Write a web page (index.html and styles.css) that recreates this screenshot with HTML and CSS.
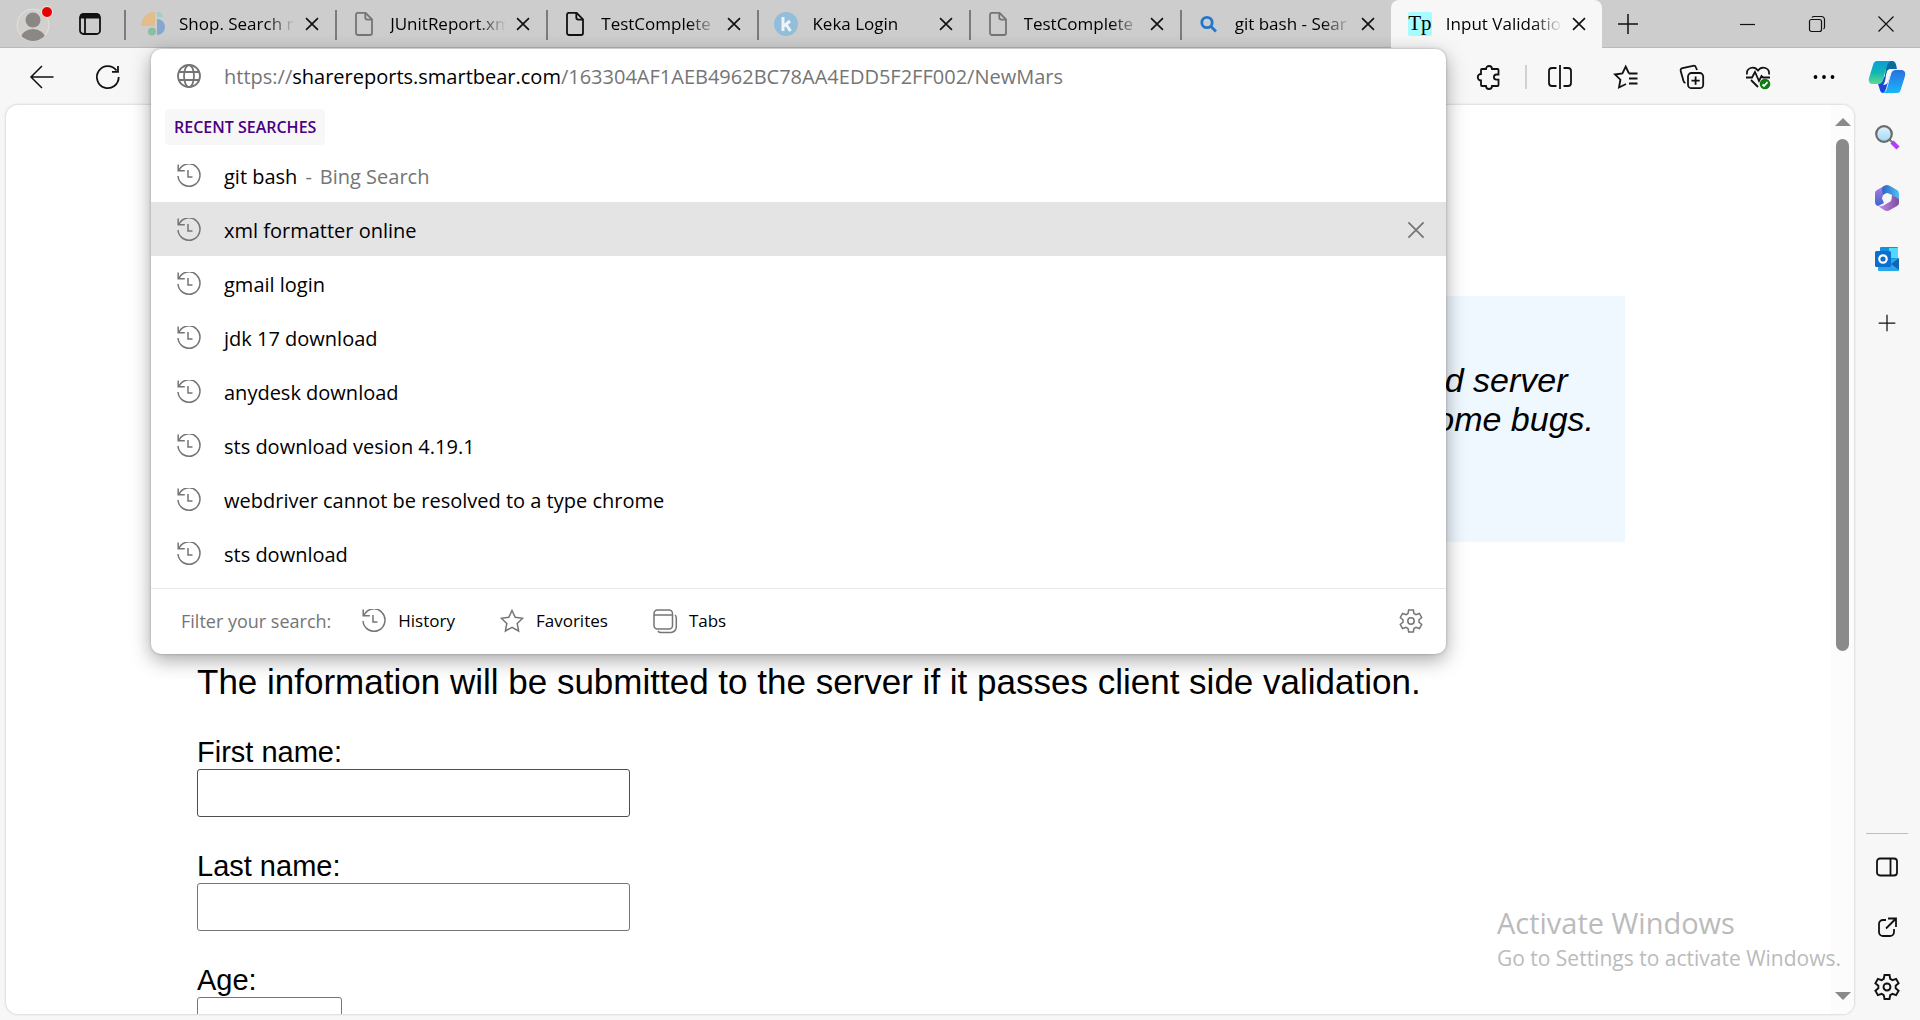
FILE: index.html
```html
<!DOCTYPE html>
<html lang="en">
<head>
<meta charset="utf-8">
<title>Input Validation</title>
<link rel="stylesheet" href="styles.css">
</head>
<body>
<svg class="defs" aria-hidden="true">
  <symbol id="close" viewBox="0 0 24 24"><path d="M5.500 5.500l13 13M18.500 5.500l-13 13"/></symbol>
  <symbol id="plus" viewBox="0 0 24 24"><path d="M12 2v20M2 12h20"/></symbol>
  <symbol id="page" viewBox="0 0 24 24"><path d="M6 .8h7.500L20 7.300V21a2 2 0 0 1-2 2H6a2 2 0 0 1-2-2V2.800a2 2 0 0 1 2-2zM13.300 1v4.600a2 2 0 0 0 2 2H20"/></symbol>
  <symbol id="history" viewBox="0 0 24 24"><path d="M1.200 .5v6.300h6.600M2 6.300A11 11.200 0 1 1 1 12M11 6v7h4.500"/></symbol>
  <symbol id="gear" viewBox="0 0 24 24"><path d="M9.700 1h4.600l.7 3.500 2 1.200 3.400-1.200 2.300 4-2.700 2.300v2.400l2.700 2.300-2.300 4-3.400-1.200-2 1.200-.7 3.500H9.700L9 19.500l-2-1.200-3.400 1.200-2.300-4L4 13.200v-2.400L1.300 8.500l2.300-4L7 5.700l2-1.200z"/><circle cx="12" cy="12" r="3.200"/></symbol>
  <symbol id="star" viewBox="0 0 24 24"><path d="M12 1.500l3.200 6.800 7.500 1-5.500 5.200 1.400 7.500L12 18.300 5.400 22l1.400-7.500L1.300 9.300l7.500-1z"/></symbol>
</svg>

<header class="titlebar">
  <button class="avatar" aria-label="Profile">
    <svg width="36" height="36" viewBox="0 0 36 36"><defs><clipPath id="face"><circle cx="17" cy="19" r="16"/></clipPath></defs><circle cx="17" cy="19" r="16" fill="#d2d0cd" stroke="#e4e2df"/><g clip-path="url(#face)" fill="#8a8785"><circle cx="17" cy="14" r="7.500"/><ellipse cx="17" cy="32" rx="12" ry="9"/></g><circle cx="31" cy="6" r="5.500" fill="#e60000" stroke="#eee" stroke-width="1"/></svg>
  </button>
  <button class="tab-menu" aria-label="Tab actions">
    <svg class="ink bold" width="24" height="24" viewBox="0 0 24 24"><rect x="2" y="2" width="20" height="20" rx="3.500"/><path d="M2 4.500h20" stroke-width="4"/><path d="M7 6v16"/></svg>
  </button>
  <nav class="tabs">
    <div class="tab">
      <svg class="fav" viewBox="0 0 24 24"><path d="M0 14A14 14 0 0 1 14 0v14z" fill="#e2bd8a"/><path d="M16 0a6 6 0 0 1 6 5h-6z" fill="#9fcdd0"/><path d="M16 7a8 8 0 0 1 0 16z" fill="#86a7cf"/><circle cx="11" cy="19.500" r="4" fill="#8bbfa5"/></svg>
      <span class="tab-title">Shop. Search r</span><button class="tab-close" aria-label="Close tab"><svg class="ink bold"><use href="#close"/></svg></button>
    </div>
    <div class="tab">
      <svg class="fav gray bold"><use href="#page"/></svg>
      <span class="tab-title">JUnitReport.xm</span><button class="tab-close" aria-label="Close tab"><svg class="ink bold"><use href="#close"/></svg></button>
    </div>
    <div class="tab">
      <svg class="fav ink bold"><use href="#page"/></svg>
      <span class="tab-title">TestComplete</span><button class="tab-close" aria-label="Close tab"><svg class="ink bold"><use href="#close"/></svg></button>
    </div>
    <div class="tab">
      <svg class="fav" viewBox="0 0 24 24"><circle cx="12" cy="12" r="12" fill="#93bedb"/><path d="M9 5v14M16 9l-6 5M12 12.500l4.500 6.500" stroke="#eef4f8" stroke-width="3" fill="none"/></svg>
      <span class="tab-title">Keka Login</span><button class="tab-close" aria-label="Close tab"><svg class="ink bold"><use href="#close"/></svg></button>
    </div>
    <div class="tab">
      <svg class="fav gray bold"><use href="#page"/></svg>
      <span class="tab-title">TestComplete</span><button class="tab-close" aria-label="Close tab"><svg class="ink bold"><use href="#close"/></svg></button>
    </div>
    <div class="tab">
      <svg class="fav" viewBox="0 0 24 24"><g fill="none" stroke="#2277cc" stroke-width="2.800"><circle cx="10" cy="10.500" r="5.200"/><path d="M14 14.500l5 5"/></g></svg>
      <span class="tab-title">git bash - Sear</span><button class="tab-close" aria-label="Close tab"><svg class="ink bold"><use href="#close"/></svg></button>
    </div>
    <div class="tab active">
      <span class="fav tp">Tp</span>
      <span class="tab-title">Input Validatio</span><button class="tab-close" aria-label="Close tab"><svg class="ink bold"><use href="#close"/></svg></button>
    </div>
  </nav>
  <button class="new-tab" aria-label="New tab"><svg class="ink" width="24" height="24"><use href="#plus"/></svg></button>
  <div class="window-buttons">
    <button aria-label="Minimize"><svg class="ink thin" width="16" height="16" viewBox="0 0 16 16"><path d="M0 8.500h15"/></svg></button>
    <button aria-label="Restore"><svg class="ink thin" width="16" height="16" viewBox="0 0 16 16"><rect x=".5" y="3.500" width="12" height="12" rx="2"/><path d="M3 1.500Q3.500.5 5 .5h7.500a3 3 0 0 1 3 3V11q0 1.500-1 2"/></svg></button>
    <button aria-label="Close"><svg class="ink thin" width="16" height="16" viewBox="0 0 16 16"><path d="M.5.500l15 15M15.500.5l-15 15"/></svg></button>
  </div>
</header>

<div class="toolbar">
  <button class="tool" aria-label="Back"><svg class="ink" viewBox="0 0 24 24"><path d="M23.500 12H1M12 1L1 12l11 11"/></svg></button>
  <button class="tool" aria-label="Refresh"><svg class="ink bold" viewBox="0 0 24 24"><path d="M22.700 12A10.900 11 0 1 1 20.500 5.500M22 1v5.800h-6"/></svg></button>
  <div class="toolbar-end">
    <button class="tool ext" aria-label="Extensions"><svg class="ink bold" viewBox="0 0 24 24"><path d="M5 4h4a3 3 0 0 1 6 0h5.500a1 1 0 0 1 1 1v4.500h-2a2.600 2.600 0 0 0 0 5.200h2V20a1 1 0 0 1-1 1H15a3 3 0 0 1-6 0H5a1 1 0 0 1-1-1v-4.500a3 3 0 0 1 0-6.500V5a1 1 0 0 1 1-1z"/></svg></button>
    <span class="divider"></span>
    <button class="tool" aria-label="Split screen"><svg class="ink bold" viewBox="0 0 24 24"><path d="M8.500 3H4a3 3 0 0 0-3 3v12a3 3 0 0 0 3 3h4.500M15.500 3H20a3 3 0 0 1 3 3v12a3 3 0 0 1-3 3h-4.500M12 0v24"/></svg></button>
    <button class="tool" aria-label="Favorites"><svg class="ink bold" viewBox="0 0 24 24"><path d="M15 8.500l-3.300-7-3.300 7-7.400 1 5.400 5.200L5 22.500l7-3.500M15 8.500h8.500M15 13.500h8.500M15 18.500h8.500"/></svg></button>
    <button class="tool" aria-label="Collections"><svg class="ink bold" viewBox="0 0 24 24"><rect x="8" y="8" width="15.200" height="15.200" rx="3.500"/><path d="M15.600 11.500v8.200M11.500 15.600h8.200M17 5l-1-2.500A2.600 2.600 0 0 0 13 .8L2.500 3A2.600 2.600 0 0 0 .7 6l2.800 10a3 3 0 0 0 2 2"/></svg></button>
    <button class="tool" aria-label="Browser essentials"><svg class="ink bold" viewBox="0 0 24 24"><path d="M1 9.500C0 3 8 0 12 5.500 16 0 24 3 23 9.500M0 12.500h6L9 7l4 9 2.500-5 1.500 1.500h7M5 15l7 7"/><circle cx="19" cy="19" r="5.300" fill="#107c10" stroke="none"/><path d="M16.500 19.500l1.500 1.500 3.500-3.800" stroke="#fff"/></svg></button>
    <button class="tool" aria-label="More"><svg viewBox="0 0 24 24"><circle cx="3.500" cy="12" r="1.900"/><circle cx="12" cy="12" r="1.900"/><circle cx="20.500" cy="12" r="1.900"/></svg></button>
    <button class="tool copilot" aria-label="Copilot">
      <svg viewBox="0 0 36 32"><defs><linearGradient id="ca" x1="0" y1="0" x2="0" y2="1"><stop offset="0" stop-color="#0c9ed9"/><stop offset=".5" stop-color="#12b5b5"/><stop offset="1" stop-color="#5fdc8b"/></linearGradient><linearGradient id="cb" x1="0" y1="0" x2="0" y2="1"><stop offset="0" stop-color="#2b6fe0"/><stop offset="1" stop-color="#18b6fb"/></linearGradient></defs><path d="M18 0h5c3 0 4 2 5 8h-6c-2 0-3 1-4 4l-3 8z" fill="#0b6c9f"/><path d="M8 0h14c-3 1-4 4-5 8l-3 11c-1 3-2 4-5 4H4c-3 0-5-2-4-6L4 4c1-3 2-4 4-4z" fill="url(#ca)"/><path d="M9 23c2 0 4-1 5-4l1-3 6-2-4 14c-1 2-2 4-3 4-3 0-3-4-5-9z" fill="#1a46d6"/><path d="M28 32H14c3-1 4-4 5-8l3-11c1-3 2-4 5-4h5c3 0 5 2 4 6l-4 13c-1 3-2 4-4 4z" fill="url(#cb)"/><path d="M18 10q1-2 4-2h5q-4 0-5 4l-3 9q-1 3-5 3 1-1 2-4z" fill="#f7f7f7"/></svg>
    </button>
  </div>
</div>

<div class="workspace">
  <main class="viewport">
    <div class="page">
      <section class="intro"><p>side and server<br>have some bugs.</p></section>
      <form>
        <p class="lead">The information will be submitted to the server if it passes client side validation.</p>
        <div class="field"><label for="first">First name:</label><input id="first" class="focus" type="text"></div>
        <div class="field"><label for="last">Last name:</label><input id="last" type="text"></div>
        <div class="field"><label for="age">Age:</label><input id="age" class="short" type="text"></div>
      </form>
    </div>
    <div class="scrollbar">
      <svg width="16" height="8" viewBox="0 0 16 8"><path d="M8 0l8 8H0z"/></svg>
      <div class="track"><div class="thumb"></div></div>
      <svg width="16" height="8" viewBox="0 0 16 8"><path d="M8 8L0 0h16z"/></svg>
    </div>
    <div class="watermark"><strong>Activate Windows</strong><span>Go to Settings to activate Windows.</span></div>
  </main>
  <aside class="sidebar">
    <button aria-label="Search"><svg width="24" height="24" viewBox="0 0 24 24"><defs><linearGradient id="gl" x1="0" y1="0" x2="0" y2="1"><stop offset="0" stop-color="#e4f3fc"/><stop offset="1" stop-color="#9fd6f7"/></linearGradient></defs><path d="M17 17l6 6" stroke="#b93bf5" stroke-width="4.500"/><path d="M14.500 14.500l3 3" stroke="#777" stroke-width="2"/><circle cx="9" cy="9" r="7.800" fill="url(#gl)" stroke="#6b6b6b" stroke-width="2.200"/></svg></button>
    <button aria-label="Microsoft 365"><svg width="24" height="26" viewBox="0 0 24 26"><defs><linearGradient id="ma" x1="0" y1="0" x2="1" y2="0"><stop offset="0" stop-color="#2b63c6"/><stop offset="1" stop-color="#4cc3f2"/></linearGradient><linearGradient id="mb" x1="0" y1="0" x2="0" y2="1"><stop offset="0" stop-color="#b07fe0"/><stop offset="1" stop-color="#3a66d4"/></linearGradient><linearGradient id="mc" x1="0" y1="0" x2="1" y2="0"><stop offset="0" stop-color="#c48cf0"/><stop offset="1" stop-color="#7a4fa0"/></linearGradient></defs><path d="M9 1L2 5Q0 6 0 8v9q0 3 3 4l6-3-2-5 2-4z" fill="url(#mb)"/><path d="M9 1q3-2 6 0l7 4q2 1 2 4v6l-7-5-5-2-4 2-1-6q0-2 2-3z" fill="url(#ma)"/><path d="M24 14v4q0 2-2 3l-7 4q-3 2-6 0l-6-4q4 1 8-2l5-3 1-6z" fill="url(#mc)"/><circle cx="12" cy="13" r="4.500" fill="#f7f7f7"/></svg></button>
    <button aria-label="Outlook"><svg width="24" height="24" viewBox="0 0 24 24"><path d="M5 1q0-1 1-1h16q1 0 1 1v13H5z" fill="#1490df"/><path d="M14 1h9v10h-9z" fill="#50d9ff"/><path d="M3 14l20-3 1 1v11q0 1-1 1H4q-1 0-1-1z" fill="#28a8ea"/><path d="M24 11v12l-8-6z" fill="#1066b5"/><rect y="4" width="16" height="16" rx="1.500" fill="#0c6fce"/><circle cx="8" cy="12" r="3.700" fill="none" stroke="#fff" stroke-width="2.200"/></svg></button>
    <button class="customize" aria-label="Customize"><svg class="ink" width="20" height="20"><use href="#plus"/></svg></button>
    <div class="sidebar-end">
      <button aria-label="Hide sidebar"><svg class="ink bold" width="24" height="24" viewBox="0 0 24 24"><rect x="2" y="3.500" width="20" height="17" rx="3"/><path d="M15.500 3.500v17"/></svg></button>
      <button aria-label="Open in new window"><svg class="ink bold" width="24" height="24" viewBox="0 0 24 24"><path d="M11 5H8a4 4 0 0 0-4 4v8a4 4 0 0 0 4 4h7a4 4 0 0 0 4-4v-3M13 3.500h8V12M21 3.500L11 13.500"/></svg></button>
      <button aria-label="Settings"><svg class="ink bold" width="26" height="26"><use href="#gear"/></svg></button>
    </div>
  </aside>
</div>

<div class="omnibox">
  <div class="address">
    <svg class="gray bold icon" viewBox="0 0 24 24"><circle cx="12" cy="12" r="11"/><ellipse cx="12" cy="12" rx="5" ry="11"/><path d="M2 8h20M2 16h20"/></svg>
    <span class="url">https://<b>sharereports.smartbear.com</b>/163304AF1AEB4962BC78AA4EDD5F2FF002/NewMars</span>
  </div>
  <h2>RECENT SEARCHES</h2>
  <ul>
    <li><svg class="gray icon"><use href="#history"/></svg><span class="pair">git bash <i>-</i> <i>Bing Search</i></span></li>
    <li class="selected"><svg class="gray icon"><use href="#history"/></svg><span>xml formatter online</span><button aria-label="Remove"><svg class="gray" width="28" height="28"><use href="#close"/></svg></button></li>
    <li><svg class="gray icon"><use href="#history"/></svg><span>gmail login</span></li>
    <li><svg class="gray icon"><use href="#history"/></svg><span>jdk 17 download</span></li>
    <li><svg class="gray icon"><use href="#history"/></svg><span>anydesk download</span></li>
    <li><svg class="gray icon"><use href="#history"/></svg><span>sts download vesion 4.19.1</span></li>
    <li><svg class="gray icon"><use href="#history"/></svg><span>webdriver cannot be resolved to a type chrome</span></li>
    <li><svg class="gray icon"><use href="#history"/></svg><span>sts download</span></li>
  </ul>
  <footer>
    <span class="hint">Filter your search:</span>
    <button><svg class="gray icon"><use href="#history"/></svg>History</button>
    <button><svg class="gray icon"><use href="#star"/></svg>Favorites</button>
    <button><svg class="gray icon" viewBox="0 0 24 24"><rect x="1" y="1" width="18.500" height="19" rx="3.500"/><path d="M1 6h18.500M22 6q1.300 1 1.300 3v9a5.500 5.500 0 0 1-5.500 5.500H8q-2 0-3-1.500"/></svg>Tabs</button>
    <button class="settings" aria-label="Settings"><svg class="gray icon"><use href="#gear"/></svg></button>
  </footer>
</div>
</body>
</html>
```
FILE: styles.css
```css
* { box-sizing: border-box; }
body {
  margin: 0;
  height: 100vh;
  display: flex;
  flex-direction: column;
  overflow: hidden;
  background: #f7f7f7;
  color: #000;
  font-family: "Open Sans", "Noto Sans", sans-serif;
  font-size: 20px;
}
button {
  display: flex;
  align-items: center;
  justify-content: center;
  padding: 0;
  border: 0;
  background: none;
  font: inherit;
  color: inherit;
}
svg { display: block; flex: none; overflow: visible; }
.defs { position: absolute; width: 0; height: 0; }
.ink { fill: none; stroke: #111; stroke-width: 1.5; }
.gray { fill: none; stroke: #757575; stroke-width: 1.5; }
.bold { stroke-width: 1.8; }
.thin { stroke-width: 1.2; }
.icon { width: 24px; height: 24px; }

/* Title bar */
.titlebar {
  flex: none;
  display: flex;
  height: 48px;
  background: #cdcdcd;
  box-shadow: inset 0 -1px #b9b9b9;
}
.avatar { width: 68px; }
.tab-menu { width: 44px; }
.tabs { display: flex; flex: 0 1 1490px; min-width: 0; padding-left: 12px; }
.tab {
  display: flex;
  align-items: center;
  flex: 1 1 0;
  min-width: 0;
  padding: 0 12px 0 17px;
  background: linear-gradient(#7b7b7b, #7b7b7b) 0 10px / 2px 30px no-repeat;
}
.tab.active { background: #f7f7f7; border-radius: 8px 8px 0 0; }
.fav { width: 24px; height: 24px; margin-right: 14px; flex: none; }
.tp {
  border-radius: 2px;
  background: #a6fcff;
  font: 21px/22px "Liberation Serif", serif;
  text-align: center;
}
.tab-title {
  flex: 1;
  overflow: hidden;
  white-space: nowrap;
  font-size: 17px;
  line-height: 24px;
  -webkit-mask-image: linear-gradient(to right, #000 75%, transparent);
  mask-image: linear-gradient(to right, #000 75%, transparent);
}
.tab-close { margin-left: 6px; }
.tab-close svg { width: 22px; height: 22px; }
.new-tab { width: 52px; }
.window-buttons { display: flex; margin-left: auto; }
.window-buttons button { width: 69px; }

/* Toolbar */
.toolbar { flex: none; display: flex; align-items: center; height: 57px; padding: 0 3px 0 9px; }
.tool { width: 66px; height: 48px; }
.tool svg { width: 24px; height: 24px; }
.toolbar-end { display: flex; align-items: center; margin-left: auto; }
.ext { width: 72px; }
.divider { width: 2px; height: 24px; background: #d0d0d0; }
.copilot { width: 60px; }
.copilot svg { width: 36px; height: 32px; }

/* Page area */
.workspace { flex: 1; display: flex; min-height: 0; padding-left: 6px; }
.viewport {
  position: relative;
  flex: 1;
  display: flex;
  overflow: hidden;
  margin-bottom: 6px;
  border-radius: 12px;
  background: #fff;
  box-shadow: 0 0 2px 1px #dcdcdc;
}
.page {
  flex: 1;
  padding: 191px 206px 0 191px;
  font-family: "Liberation Sans", Arial, sans-serif;
}
.intro {
  display: flex;
  justify-content: flex-end;
  height: 246px;
  padding: 65px 31px 0 0;
  background: #eff7ff;
}
.intro p { margin: 0; font-size: 34px; line-height: 39px; font-style: italic; }
.lead { margin: 120px 0 33px; font-size: 35px; line-height: 40px; white-space: nowrap; }
.field { display: flex; flex-direction: column; align-items: flex-start; margin-bottom: 32px; }
.field label { font-size: 29px; line-height: 34px; }
.field input {
  width: 433px;
  height: 48px;
  border: 1px solid #767676;
  border-radius: 3px;
  background: #fff;
  font-size: 29px;
}
.field input.focus { border-color: #4f4f4f; }
.field input.short { width: 145px; }
.scrollbar {
  display: flex;
  flex-direction: column;
  align-items: center;
  gap: 13px;
  width: 23px;
  padding: 13px 0 14px;
  background: #fcfcfc;
  fill: #8a8a8a;
}
.track { flex: 1; }
.thumb { width: 13px; height: 61%; border-radius: 7px; background: #8a8a8a; }
.watermark {
  position: absolute;
  right: 13px;
  bottom: 41px;
  display: flex;
  flex-direction: column;
  color: #bbb;
  font-size: 21px;
  line-height: 30px;
}
.watermark strong { font-size: 29px; font-weight: 400; line-height: 40px; }

/* Sidebar */
.sidebar { display: flex; flex-direction: column; width: 66px; padding: 1px 0 3px; }
.sidebar button { width: 66px; height: 61px; }
.sidebar .customize { height: 67px; }
.sidebar-end {
  margin-top: auto;
  padding-top: 4px;
  background: linear-gradient(#bdbdbd, #bdbdbd) center top / 42px 1px no-repeat;
}
.sidebar .sidebar-end button { height: 60px; }

/* Address bar suggestions */
.omnibox {
  position: absolute;
  top: 49px;
  left: 151px;
  right: 474px;
  overflow: visible;
  border-radius: 10px;
  background: #fff;
  box-shadow: 0 6px 20px rgba(0, 0, 0, .35), 0 0 3px rgba(0, 0, 0, .25);
}
.address { display: flex; align-items: center; gap: 23px; height: 54px; padding-left: 26px; }
.url { color: #757575; }
.url b { color: #000; font-weight: 400; }
.omnibox h2 {
  width: max-content;
  margin: 6px 0 3px 14px;
  padding: 0 9px;
  border-radius: 4px;
  background: #f7f7f7;
  color: #4b0082;
  font-size: 16px;
  font-weight: 600;
  line-height: 36px;
}
.omnibox ul { margin: 0; padding: 0 0 8px; list-style: none; }
.omnibox li { display: flex; align-items: center; gap: 23px; height: 54px; padding: 2px 16px 0 26px; }
.pair { display: flex; gap: 8px; }
.pair i { color: #757575; font-style: normal; }
.selected { background: #e4e4e4; }
.selected button { margin-left: auto; }
.omnibox footer {
  display: flex;
  align-items: center;
  height: 66px;
  padding: 0 23px 2px 30px;
  border-top: 1px solid #e8e8e8;
  font-size: 17px;
}
.hint { margin-right: 31px; color: #757575; font-size: 18px; }
.omnibox footer button { gap: 12px; margin-right: 45px; }
.omnibox footer .settings { margin: 0 0 0 auto; }
```
